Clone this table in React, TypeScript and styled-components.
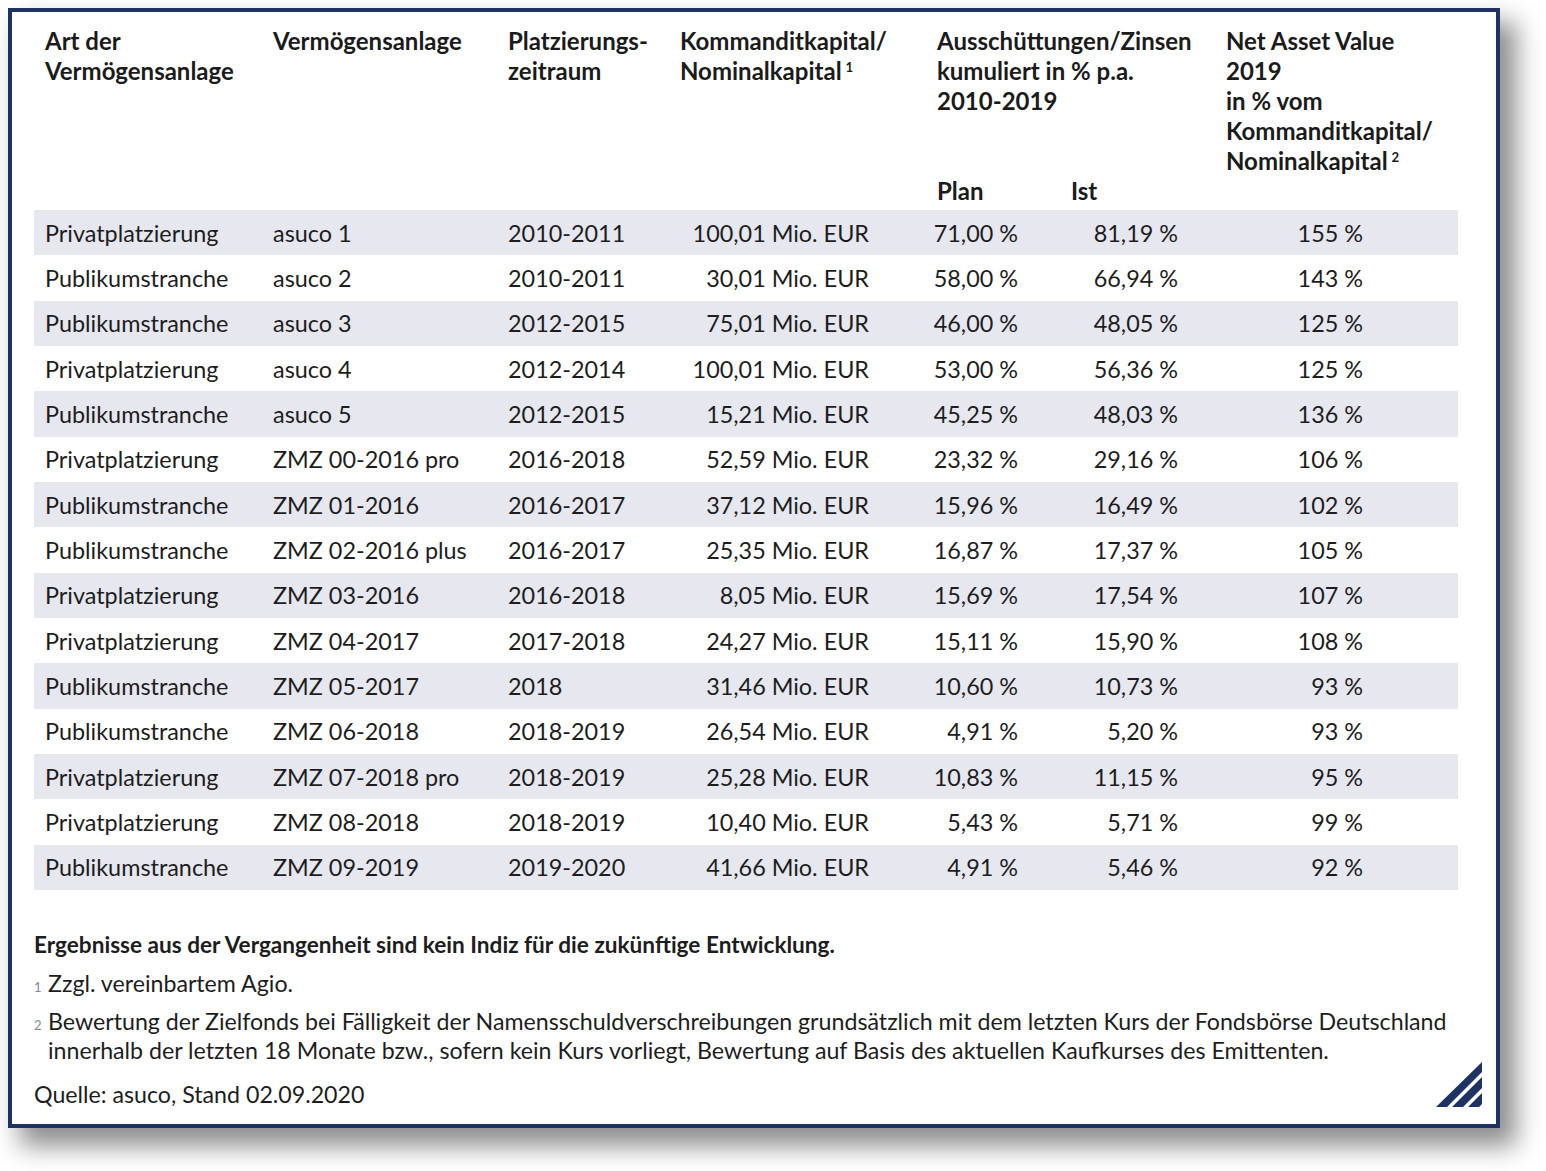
import React from "react";
import styled, { createGlobalStyle } from "styled-components";

const GlobalStyle = createGlobalStyle`
  html, body { margin: 0; padding: 0; background: #ffffff; }
  body { padding: 8px 50px 45px 8px; min-height: 1171px; box-sizing: border-box; font-family: Lato, "Open Sans", sans-serif; color: #1d1d1d; }
`;

const COLS = "228px 235px 172px 257px 134px 155px 243px";

const Frame = styled.div`
  box-sizing: border-box;
  width: 1492px;
  border: 4px solid #1f3264;
  background: #ffffff;
  box-shadow: 14px 16px 24px 2px rgba(0, 0, 0, 0.45);
  padding: 14px 38px 15px 22px;
  display: flex;
  flex-direction: column;
`;

const HeaderGrid = styled.div`
  display: grid;
  grid-template-columns: ${COLS};
  grid-template-rows: auto 30px;
  margin-bottom: 4px;
`;

const HeadCell = styled.div<{ $col: string; $row: string }>`
  grid-column: ${(p) => p.$col};
  grid-row: ${(p) => p.$row};
  padding-left: 11px;
  font-weight: 700;
  font-size: 24px;
  line-height: 30px;
  white-space: nowrap;
  color: #1b1b1b;
`;

const Sup = styled.sup`
  font-size: 0.55em;
  vertical-align: 0.6em;
  line-height: 0;
  margin-left: 4px;
`;

const Body = styled.div`
  display: flex;
  flex-direction: column;
`;

const Row = styled.div<{ $striped: boolean }>`
  display: grid;
  grid-template-columns: ${COLS};
  height: 45.33px;
  align-items: center;
  background: ${(p) => (p.$striped ? "#e6e7ef" : "#ffffff")};
`;

const Cell = styled.div<{ $right?: number }>`
  font-size: 23.4px;
  line-height: 30px;
  white-space: nowrap;
  padding-left: ${(p) => (p.$right === undefined ? "11px" : "0")};
  padding-right: ${(p) => (p.$right === undefined ? "0" : `${p.$right}px`)};
  text-align: ${(p) => (p.$right === undefined ? "left" : "right")};
`;

const Footer = styled.div`
  margin-top: 40px;
  display: flex;
  flex-direction: column;
  font-size: 23.2px;
  line-height: 30px;
  color: #1d1d1d;
`;

const Disclaimer = styled.div`
  font-weight: 700;
  font-size: 22.6px;
  margin-bottom: 9px;
`;

const Note = styled.div<{ $gapBelow: number }>`
  display: flex;
  align-items: baseline;
  line-height: 29px;
  margin-bottom: ${(p) => p.$gapBelow}px;
`;

const NoteMark = styled.span`
  flex: 0 0 14px;
  font-size: 13px;
  color: #7d88a8;
`;

const NoteText = styled.span`
  flex: 1;
`;

const BottomRow = styled.div`
  display: flex;
  justify-content: space-between;
  align-items: flex-end;
`;

const Source = styled.div`
  line-height: 30px;
`;

const LogoMark = styled.svg`
  display: block;
  width: 46px;
  height: 45px;
  margin-right: -24px;
  margin-bottom: 2px;
`;

type Data = [string, string, string, string, string, string, string];

const rows: Data[] = [
  ["Privatplatzierung", "asuco 1", "2010-2011", "100,01 Mio. EUR", "71,00 %", "81,19 %", "155 %"],
  ["Publikumstranche", "asuco 2", "2010-2011", "30,01 Mio. EUR", "58,00 %", "66,94 %", "143 %"],
  ["Publikumstranche", "asuco 3", "2012-2015", "75,01 Mio. EUR", "46,00 %", "48,05 %", "125 %"],
  ["Privatplatzierung", "asuco 4", "2012-2014", "100,01 Mio. EUR", "53,00 %", "56,36 %", "125 %"],
  ["Publikumstranche", "asuco 5", "2012-2015", "15,21 Mio. EUR", "45,25 %", "48,03 %", "136 %"],
  ["Privatplatzierung", "ZMZ 00-2016 pro", "2016-2018", "52,59 Mio. EUR", "23,32 %", "29,16 %", "106 %"],
  ["Publikumstranche", "ZMZ 01-2016", "2016-2017", "37,12 Mio. EUR", "15,96 %", "16,49 %", "102 %"],
  ["Publikumstranche", "ZMZ 02-2016 plus", "2016-2017", "25,35 Mio. EUR", "16,87 %", "17,37 %", "105 %"],
  ["Privatplatzierung", "ZMZ 03-2016", "2016-2018", "8,05 Mio. EUR", "15,69 %", "17,54 %", "107 %"],
  ["Privatplatzierung", "ZMZ 04-2017", "2017-2018", "24,27 Mio. EUR", "15,11 %", "15,90 %", "108 %"],
  ["Publikumstranche", "ZMZ 05-2017", "2018", "31,46 Mio. EUR", "10,60 %", "10,73 %", "93 %"],
  ["Publikumstranche", "ZMZ 06-2018", "2018-2019", "26,54 Mio. EUR", "4,91 %", "5,20 %", "93 %"],
  ["Privatplatzierung", "ZMZ 07-2018 pro", "2018-2019", "25,28 Mio. EUR", "10,83 %", "11,15 %", "95 %"],
  ["Privatplatzierung", "ZMZ 08-2018", "2018-2019", "10,40 Mio. EUR", "5,43 %", "5,71 %", "99 %"],
  ["Publikumstranche", "ZMZ 09-2019", "2019-2020", "41,66 Mio. EUR", "4,91 %", "5,46 %", "92 %"],
];

const Logo = () => (
  <LogoMark viewBox="0 0 46 45" aria-hidden="true">
    <polygon points="0,45 11,45 46,10 46,0" fill="#1f3264" />
    <polygon points="16,45 27,45 46,26 46,15" fill="#1f3264" />
    <polygon points="32,45 43,45 46,42 46,31" fill="#1f3264" />
  </LogoMark>
);

export default function App() {
  return (
    <>
      <GlobalStyle />
      <Frame>
        <HeaderGrid>
          <HeadCell $col="1" $row="1">
            Art der
            <br />
            Vermögensanlage
          </HeadCell>
          <HeadCell $col="2" $row="1">
            Vermögensanlage
          </HeadCell>
          <HeadCell $col="3" $row="1">
            Platzierungs-
            <br />
            zeitraum
          </HeadCell>
          <HeadCell $col="4" $row="1">
            Kommanditkapital/
            <br />
            Nominalkapital<Sup>1</Sup>
          </HeadCell>
          <HeadCell $col="5 / span 2" $row="1">
            Ausschüttungen/Zinsen
            <br />
            kumuliert in % p.a.
            <br />
            2010-2019
          </HeadCell>
          <HeadCell $col="7" $row="1">
            Net Asset Value
            <br />
            2019
            <br />
            in % vom
            <br />
            Kommanditkapital/
            <br />
            Nominalkapital<Sup>2</Sup>
          </HeadCell>
          <HeadCell $col="5" $row="2">
            Plan
          </HeadCell>
          <HeadCell $col="6" $row="2">
            Ist
          </HeadCell>
        </HeaderGrid>
        <Body>
          {rows.map((r, i) => (
            <Row key={i} $striped={i % 2 === 0}>
              <Cell>{r[0]}</Cell>
              <Cell>{r[1]}</Cell>
              <Cell>{r[2]}</Cell>
              <Cell $right={57}>{r[3]}</Cell>
              <Cell $right={42}>{r[4]}</Cell>
              <Cell $right={37}>{r[5]}</Cell>
              <Cell $right={95}>{r[6]}</Cell>
            </Row>
          ))}
        </Body>
        <Footer>
          <Disclaimer>Ergebnisse aus der Vergangenheit sind kein Indiz für die zukünftige Entwicklung.</Disclaimer>
          <Note $gapBelow={5}>
            <NoteMark>1</NoteMark>
            <NoteText>Zzgl. vereinbartem Agio.</NoteText>
          </Note>
          <Note $gapBelow={-3}>
            <NoteMark>2</NoteMark>
            <NoteText>
              Bewertung der Zielfonds bei Fälligkeit der Namensschuldverschreibungen grundsätzlich mit dem letzten Kurs der Fondsbörse Deutschland
              <br />
              innerhalb der letzten 18 Monate bzw., sofern kein Kurs vorliegt, Bewertung auf Basis des aktuellen Kaufkurses des Emittenten.
            </NoteText>
          </Note>
          <BottomRow>
            <Source>Quelle: asuco, Stand 02.09.2020</Source>
            <Logo />
          </BottomRow>
        </Footer>
      </Frame>
    </>
  );
}
